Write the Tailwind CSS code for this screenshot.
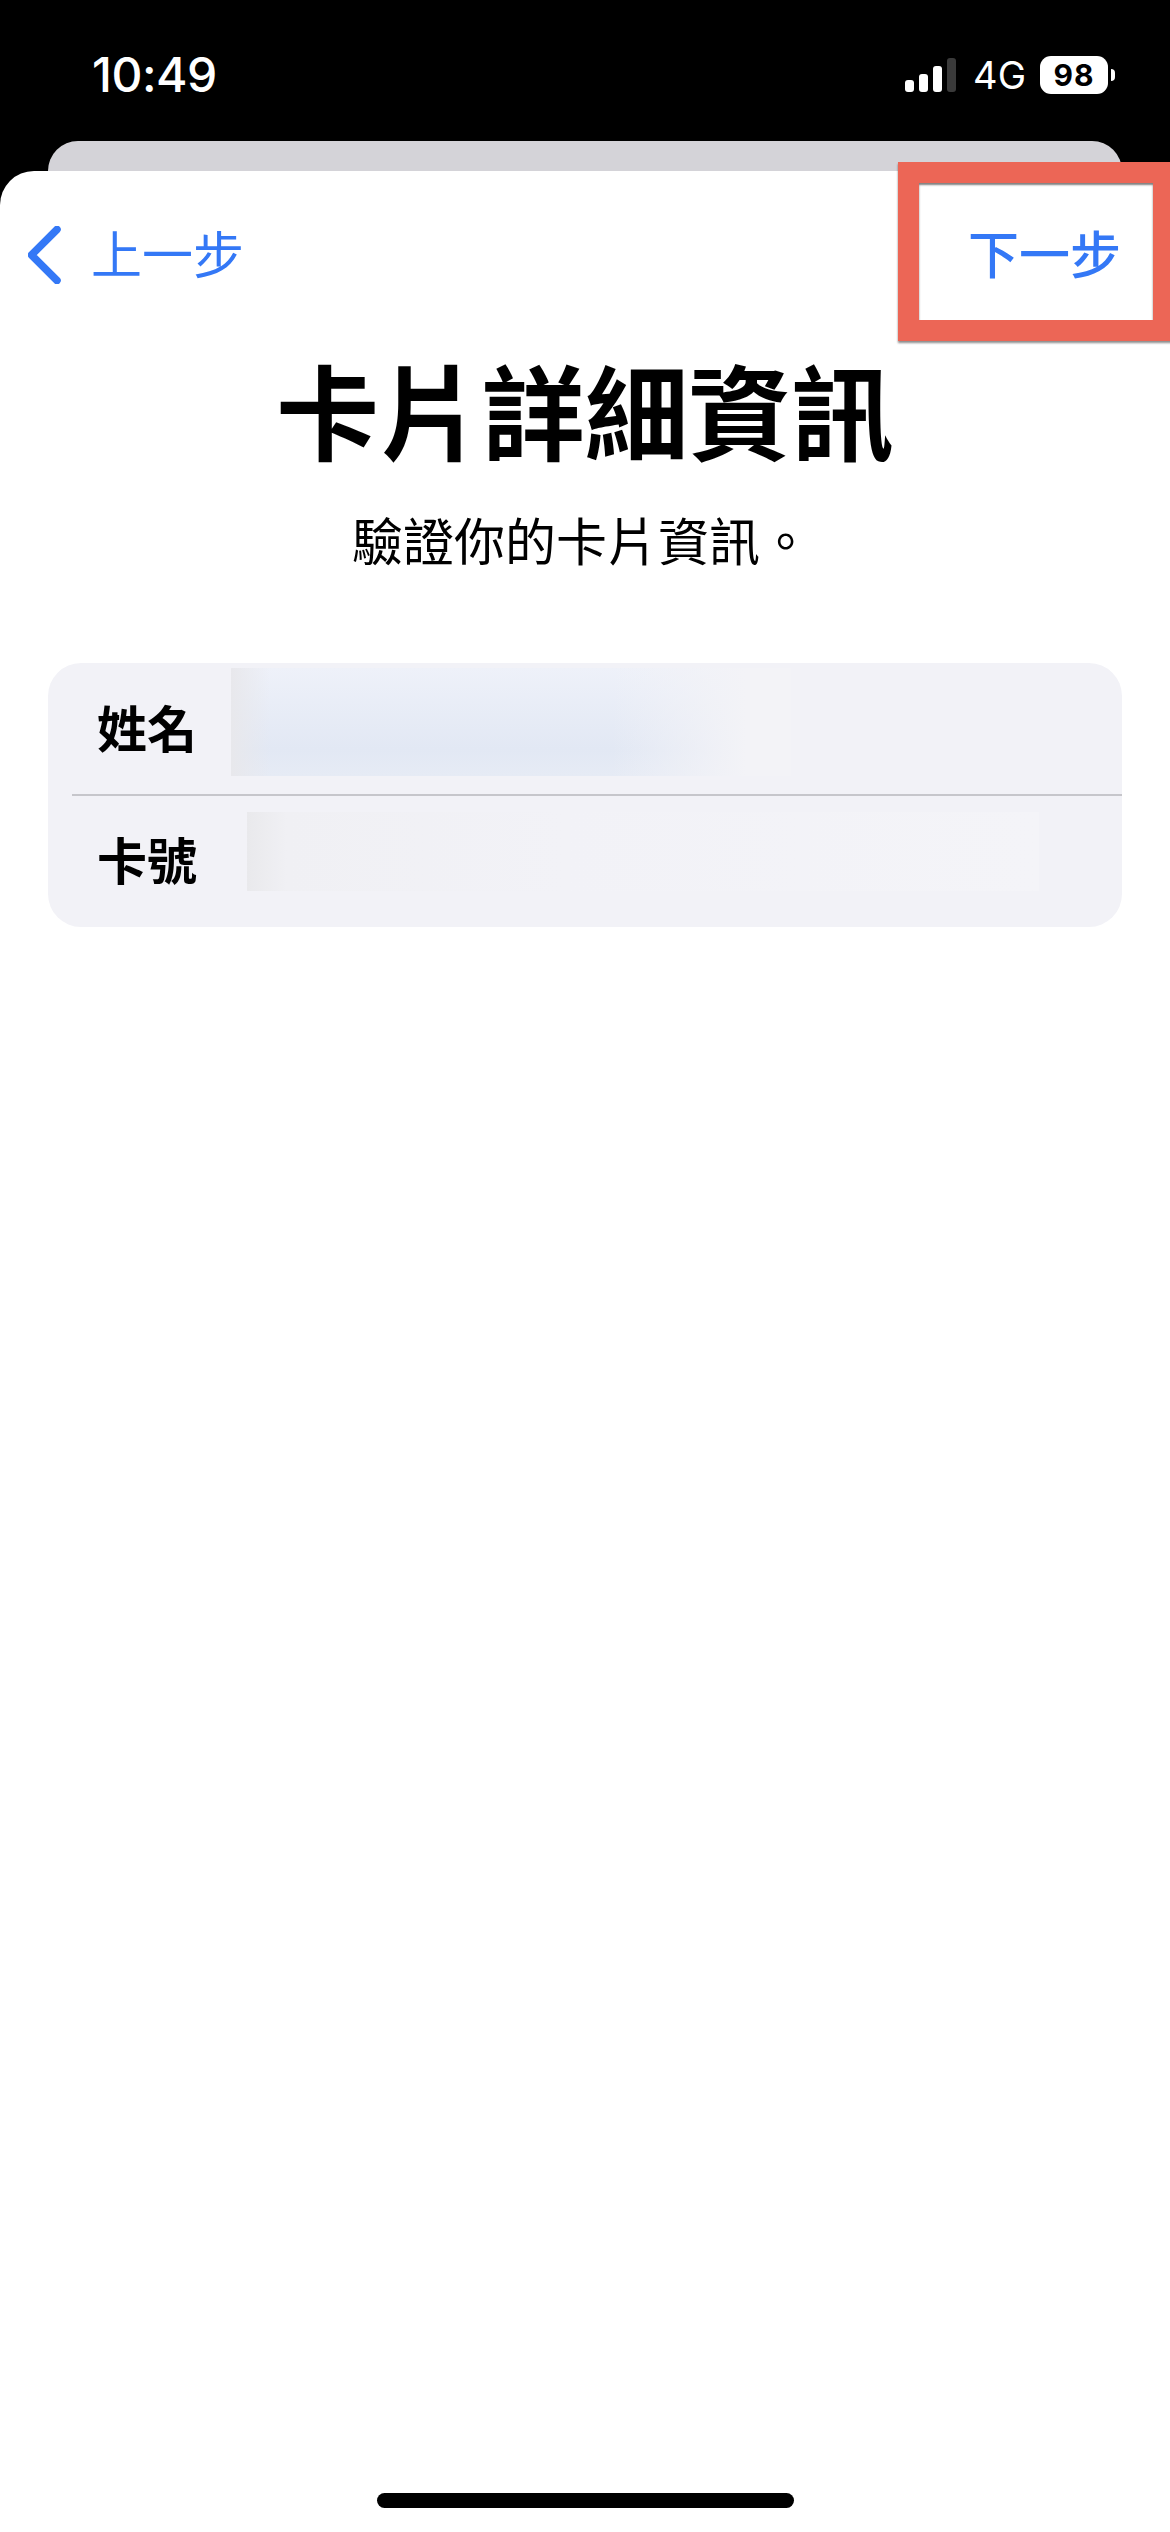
<!DOCTYPE html>
<html lang="zh-Hant">
<head>
  <meta charset="UTF-8">
  <title>卡片詳細資訊</title>
  <script src="https://cdn.jsdelivr.net/npm/@tailwindcss/browser@4"></script>
</head>
<body class="bg-black font-['Inter','Noto_Sans_CJK_TC',sans-serif]">
<div class="relative w-[1170px] h-[2532px] overflow-hidden bg-black">

  <!-- Status bar -->
  <div class="h-[141px] flex items-start justify-between pl-[92px] pr-[55px] pt-[49px] text-white">
    <span class="text-[48px] leading-[52px] font-medium tracking-[-0.5px]">10:49</span>
    <div class="flex items-center mt-[6px]">
      <div class="flex items-end gap-[5px] h-[34px] mt-[1px]">
        <div class="w-[9px] h-[12px] rounded-[3px] bg-white"></div>
        <div class="w-[9px] h-[18px] rounded-[3px] bg-white"></div>
        <div class="w-[9px] h-[26px] rounded-[3px] bg-white"></div>
        <div class="w-[9px] h-[34px] rounded-[3px] bg-[#3a3a3a]"></div>
      </div>
      <span class="ml-[17px] text-[38px] leading-[38px] mt-[1px]">4G</span>
      <div class="ml-[14px] w-[68px] h-[38px] rounded-[11px] bg-white text-black text-[30px] leading-[38px] font-bold tracking-[1px] text-center">98</div>
      <div class="ml-[3px] w-[4px] h-[12px] rounded-r-full bg-white"></div>
    </div>
  </div>

  <!-- Sheet behind -->
  <div class="mx-[48px] h-[30px] w-[1074px] rounded-t-[30px] bg-[#d4d3d8]"></div>

  <!-- Sheet -->
  <div class="relative h-[2361px] rounded-t-[34px] bg-white">
    <div class="flex items-center justify-between h-[166px]">
      <div class="flex items-center pl-[28px] pt-[2px]">
        <svg class="w-[33px] h-[58px]" viewBox="0 0 33 58" fill="none">
          <path d="M29 3.5 L3.5 29 L29 54.5" stroke="#3478f6" stroke-width="7.5" stroke-linecap="round" stroke-linejoin="round"/>
        </svg>
        <span class="ml-[30px] pt-[1px] text-[51px] leading-[58px] text-[#3478f6]">上一步</span>
      </div>
      <span class="mr-[49px] pt-[3px] text-[51px] leading-[58px] font-medium text-[#3478f6]">下一步</span>
    </div>

    <h1 class="mt-[19px] text-center text-[103px] leading-[120px] font-bold text-black">卡片詳細資訊</h1>
    <p class="mt-[35px] pl-[352px] text-[51px] leading-[64px] text-black">驗證你的卡片資訊。</p>

    <!-- Details card -->
    <div class="relative mt-[88px] mx-[48px] h-[264px] rounded-[33px] bg-[#f2f2f7] overflow-hidden">
      <div class="flex items-center h-[131px] pl-[49px] pt-[3px]">
        <span class="text-[50px] leading-[60px] font-bold text-black">姓名</span>
      </div>
      <div class="ml-[24px] h-[2px] bg-[#c6c6cb]"></div>
      <div class="flex items-center h-[131px] pl-[49px]">
        <span class="text-[50px] leading-[60px] font-bold text-black">卡號</span>
      </div>
      <!-- redacted values -->
      <div class="absolute left-[183px] top-[5px] w-[560px] h-[108px] bg-[linear-gradient(90deg,#e8e8ec_0%,rgba(232,232,236,0)_7%),linear-gradient(90deg,rgba(243,243,247,0)_68%,#f3f3f7_92%),linear-gradient(180deg,#eef1f9_0%,#e2e8f4_75%,#e6ebf5_100%)]"></div>
      <div class="absolute left-[199px] top-[149px] w-[792px] h-[79px] bg-[linear-gradient(90deg,#e9e9ec_0%,#f0f0f4_5%,#f2f2f7_40%,#f4f4f8_100%)]"></div>
    </div>

    <!-- Home indicator -->
    <div class="absolute left-[377px] bottom-[24px] w-[417px] h-[15px] rounded-full bg-black"></div>
  </div>

  <!-- Highlight around the next button -->
  <div class="absolute left-[898px] top-[162px] w-[276px] h-[179px] border-[21px] border-[#ec6656] shadow-[0_2px_2px_rgba(0,0,0,0.45),inset_0_2px_2px_rgba(0,0,0,0.5)]"></div>
</div>
</body>
</html>
